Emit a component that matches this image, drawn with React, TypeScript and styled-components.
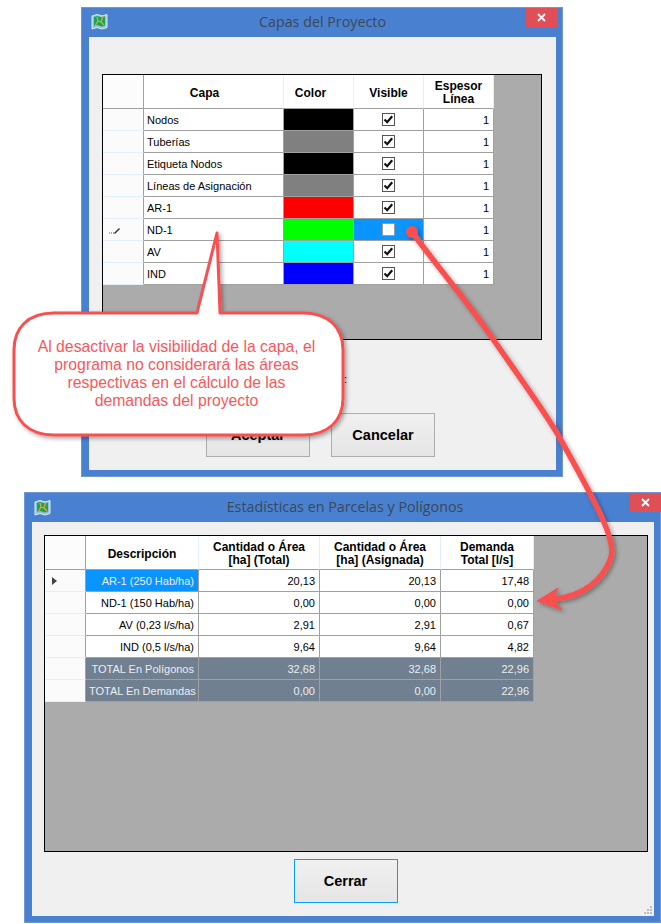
import React from "react";
import styled, { createGlobalStyle } from "styled-components";

const layers = [
    { name: "Nodos", color: "#000000", visible: true },
    { name: "Tuberías", color: "#808080", visible: true },
    { name: "Etiqueta Nodos", color: "#000000", visible: true },
    { name: "Líneas de Asignación", color: "#808080", visible: true },
    { name: "AR-1", color: "#ff0000", visible: true },
    { name: "ND-1", color: "#00ff00", visible: false },
    { name: "AV", color: "#00ffff", visible: true },
    { name: "IND", color: "#0000ff", visible: true },
];

const stats = [
    ["AR-1 (250 Hab/ha)", "20,13", "20,13", "17,48"],
    ["ND-1 (150 Hab/ha)", "0,00", "0,00", "0,00"],
    ["AV (0,23 l/s/ha)", "2,91", "2,91", "0,67"],
    ["IND (0,5 l/s/ha)", "9,64", "9,64", "4,82"],
    ["TOTAL En Polígonos", "32,68", "32,68", "22,96"],
    ["TOTAL En Demandas", "0,00", "0,00", "22,96"],
];

const LAYER_COLS = "41px 140px 70px 70px 70px";
const STATS_COLS = "41px 113px 121px 121px 93px";

const MapIcon = () => (
    <svg width="17" height="17" viewBox="0 0 17 17">
        <path d="M1 3l5-1.5 5 1.500 5-1.500v13l-5 1.500-5-1.500-5 1.500z" fill="#8fc4dc" stroke="#dfeaf2" />
        <path d="M3 4l3-1 5 1.500 3-1v9l-3 1-5-1.500-3 1z" fill="#12a85a" />
        <path d="M4 13l3-5 3 1 2-6M7 8l-1-4M10 9l3 3" fill="none" stroke="#f0a030" strokeWidth="1.200" />
    </svg>
);

const CloseGlyph = () => (
    <svg width="9" height="9" viewBox="0 0 9 9">
        <path d="M1 1l7 7M8 1l-7 7" stroke="#fff" strokeWidth="1.800" />
    </svg>
);

const CheckBox = ({ checked }: { checked: boolean }) => (
    <Box $checked={checked}>
        {checked && (
            <svg width="11" height="11" viewBox="0 0 11 11">
                <path d="M1.500 5.500l2.700 2.700 5-6" fill="none" stroke="#111" strokeWidth="2.200" />
            </svg>
        )}
    </Box>
);

const TitleBar = ({
    title,
    iconTop,
    closeRight,
    titleShift,
}: {
    title: string;
    iconTop: number;
    closeRight: number;
    titleShift: number;
}) => (
    <Bar>
        <IconSlot $top={iconTop}>
            <MapIcon />
        </IconSlot>
        <Title $shift={titleShift}>{title}</Title>
        <CloseButton $right={closeRight}>
            <CloseGlyph />
        </CloseButton>
    </Bar>
);

const LayersWindow = () => (
    <Window $width={482} $height={470} $left={81}>
        <TitleBar title="Capas del Proyecto" iconTop={6} closeRight={-1} titleShift={0} />
        <Client $top={37} $left={13}>
            <Grid $width={440} $height={266}>
                <HeaderRow $cols={LAYER_COLS}>
                    <HeaderHead />
                    <HeaderCell $shift={18}>Capa</HeaderCell>
                    <HeaderCell $shift={16}>Color</HeaderCell>
                    <HeaderCell>Visible</HeaderCell>
                    <HeaderCell>
                        Espesor
                        <br />
                        Línea
                    </HeaderCell>
                </HeaderRow>
                {layers.map((layer) => (
                    <Row $cols={LAYER_COLS} key={layer.name}>
                        <RowHead>
                            {!layer.visible && (
                                <svg width="12" height="8" viewBox="0 0 12 8">
                                    <path d="M5 7l5-5 1 1-5 5z" fill="#333" />
                                    <path d="M0 7h1M2 7h1M4 7h1" stroke="#555" />
                                </svg>
                            )}
                        </RowHead>
                        <Cell>{layer.name}</Cell>
                        <Swatch $color={layer.color} />
                        <CheckCell $selected={!layer.visible}>
                            <CheckBox checked={layer.visible} />
                        </CheckCell>
                        <Cell $align="right">1</Cell>
                    </Row>
                ))}
            </Grid>
            <NoteRow>:</NoteRow>
            <ButtonRow>
                <Button>Aceptar</Button>
                <Button>Cancelar</Button>
            </ButtonRow>
        </Client>
    </Window>
);

const StatsWindow = () => (
    <Window $width={637} $height={431} $left={24}>
        <TitleBar title="Estadísticas en Parcelas y Polígonos" iconTop={7} closeRight={-7} titleShift={4} />
        <Client $top={13} $left={12}>
            <Grid $width={604} $height={317}>
                <HeaderRow $cols={STATS_COLS}>
                    <HeaderHead />
                    <HeaderCell>Descripción</HeaderCell>
                    <HeaderCell>
                        Cantidad o Área
                        <br />
                        [ha] (Total)
                    </HeaderCell>
                    <HeaderCell>
                        Cantidad o Área
                        <br />
                        [ha] (Asignada)
                    </HeaderCell>
                    <HeaderCell>
                        Demanda
                        <br />
                        Total [l/s]
                    </HeaderCell>
                </HeaderRow>
                {stats.map((row, i) => (
                    <Row $cols={STATS_COLS} key={row[0]}>
                        <RowHead>
                            {i === 0 && <Pointer />}
                        </RowHead>
                        <Cell $align="right" $selected={i === 0} $total={i > 3}>
                            {row[0]}
                        </Cell>
                        <Cell $align="right" $total={i > 3}>{row[1]}</Cell>
                        <Cell $align="right" $total={i > 3}>{row[2]}</Cell>
                        <Cell $align="right" $total={i > 3}>{row[3]}</Cell>
                    </Row>
                ))}
            </Grid>
            <CloseRow>
                <Button $focused>Cerrar</Button>
            </CloseRow>
            <Grip>
                <svg width="10" height="10" viewBox="0 0 10 10">
                    <path d="M7 1h2v2H7zM4 4h2v2H4zM7 4h2v2H7zM1 7h2v2H1zM4 7h2v2H4zM7 7h2v2H7z" fill="#bdbdbd" />
                </svg>
            </Grip>
        </Client>
    </Window>
);

const App = () => (
    <>
        <GlobalStyle />
        <Page>
            <LayersWindow />
            <StatsWindow />
            <Overlay width="661" height="924" viewBox="0 0 661 924">
                <g filter="url(#shadow)">
                    <path
                        d="M54 313H197L217 233L220 313H303C329 313 343 328 343 350V398C343 420 329 435 303 435H54C28 435 14 420 14 398V350C14 328 28 313 54 313Z"
                        fill="#fff"
                        stroke="#fa4f4f"
                        strokeWidth="3"
                        strokeLinejoin="round"
                    />
                    <circle cx="412" cy="232" r="6" fill="#fa4f4f" />
                    <path
                        d="M412 232C440 270 470 305 493 339C520 378 540 405 557 433C575 465 592 495 603 520C612 540 614 552 610 560C603 578 585 597 553 599"
                        fill="none"
                        stroke="#fa4f4f"
                        strokeWidth="5.500"
                    />
                    <path d="M537 601L558 588L553 599L562 610Z" fill="#fa4f4f" stroke="#fa4f4f" strokeLinejoin="round" />
                </g>
                <defs>
                    <filter id="shadow" x="-10%" y="-10%" width="120%" height="120%">
                        <feDropShadow dx="2" dy="2" stdDeviation="2" floodColor="#000" floodOpacity="0.35" />
                    </filter>
                </defs>
            </Overlay>
            <CalloutText>
                Al desactivar la visibilidad de la capa, el
                <br />
                programa no considerará las áreas
                <br />
                respectivas en el cálculo de las
                <br />
                demandas del proyecto
            </CalloutText>
        </Page>
    </>
);

const GlobalStyle = createGlobalStyle`
    html, body {
        margin: 0;
        background: #fff;
        overflow: hidden;
    }
    * {
        box-sizing: border-box;
    }
`;

const Page = styled.div`
    position: relative;
    display: flex;
    flex-direction: column;
    gap: 15px;
    width: 661px;
    height: 924px;
    padding-top: 7px;
    overflow: hidden;
    font-family: "Liberation Sans", Arial, sans-serif;
`;

const Window = styled.section<{ $width: number; $height: number; $left: number }>`
    display: flex;
    flex-direction: column;
    flex: none;
    width: ${({ $width }) => $width}px;
    height: ${({ $height }) => $height}px;
    margin-left: ${({ $left }) => $left}px;
    padding: 0 7px 7px 8px;
    background: #4a80d0;
    box-shadow: inset 0 0 0 1px #6f97d2;
`;

const Bar = styled.header`
    position: relative;
    display: flex;
    align-items: center;
    justify-content: center;
    flex: none;
    height: 30px;
    padding-bottom: 2px;
`;

const IconSlot = styled.span<{ $top: number }>`
    position: absolute;
    left: 2px;
    top: ${({ $top }) => $top}px;
    display: flex;
`;

const Title = styled.h1<{ $shift: number }>`
    margin: 0;
    padding-left: ${({ $shift }) => $shift}px;
    font-family: "Open Sans", sans-serif;
    font-size: 14.300px;
    font-weight: 400;
    color: #3b4858;
`;

const CloseButton = styled.span<{ $right: number }>`
    position: absolute;
    right: ${({ $right }) => $right}px;
    top: 1px;
    display: flex;
    align-items: center;
    justify-content: center;
    width: 31px;
    height: 19px;
    background: #e04f55;
`;

const Client = styled.div<{ $top: number; $left: number }>`
    position: relative;
    flex: 1;
    padding: ${({ $top }) => $top}px 13px 13px ${({ $left }) => $left}px;
    background: #f0f0f0;
`;

const Grid = styled.div<{ $width: number; $height: number }>`
    width: ${({ $width }) => $width}px;
    height: ${({ $height }) => $height}px;
    border: 1px solid #000;
    background: #ababab;
    overflow: hidden;
`;

const Row = styled.div<{ $cols: string }>`
    display: grid;
    grid-template-columns: ${({ $cols }) => $cols};
    width: max-content;
    height: 22px;
`;

const HeaderRow = styled(Row)`
    height: 34px;
`;

const HeaderHead = styled.div`
    background: #fcfcfc;
    border-right: 1px solid #a0a0a0;
    border-bottom: 1px solid #a0a0a0;
`;

const HeaderCell = styled.div<{ $shift?: number }>`
    display: flex;
    align-items: center;
    justify-content: center;
    padding-top: 3px;
    padding-right: ${({ $shift }) => $shift ?? 0}px;
    text-align: center;
    background: #fff;
    border-right: 1px solid #e3effa;
    border-bottom: 1px solid #a0a0a0;
    font-size: 12px;
    font-weight: 700;
    line-height: 13px;
    color: #000;
`;

const RowHead = styled.div`
    display: flex;
    align-items: center;
    padding-left: 6px;
    background: #fbfbfb;
    border-right: 1px solid #a0a0a0;
    border-bottom: 1px solid #e3effa;
`;

const Pointer = styled.span`
    display: block;
    margin-left: 1px;
    width: 0;
    height: 0;
    border-left: 5px solid #444;
    border-top: 4px solid transparent;
    border-bottom: 4px solid transparent;
`;

const Cell = styled.div<{ $align?: string; $selected?: boolean; $total?: boolean }>`
    height: 22px;
    padding: 1px 4px 0 3px;
    background: ${({ $selected, $total }) => ($selected ? "#0a94ff" : $total ? "#708090" : "#fff")};
    border-right: 1px solid #a0a0a0;
    border-bottom: 1px solid #a0a0a0;
    font-size: 11px;
    line-height: 20px;
    white-space: nowrap;
    text-align: ${({ $align }) => $align ?? "left"};
    color: ${({ $selected, $total }) => ($selected || $total ? "#e9eef2" : "#000")};
`;

const Swatch = styled.div<{ $color: string }>`
    background: ${({ $color }) => $color};
    border-right: 1px solid #a0a0a0;
    border-bottom: 1px solid #a0a0a0;
`;

const CheckCell = styled.div<{ $selected: boolean }>`
    display: flex;
    align-items: center;
    justify-content: center;
    background: ${({ $selected }) => ($selected ? "#0a94ff" : "#fff")};
    border-right: 1px solid #a0a0a0;
    border-bottom: 1px solid #a0a0a0;
`;

const Box = styled.span<{ $checked: boolean }>`
    display: flex;
    align-items: center;
    justify-content: center;
    width: 13px;
    height: 13px;
    background: #fff;
    border: 1px solid ${({ $checked }) => ($checked ? "#555" : "#9a9a9a")};
`;

const NoteRow = styled.div`
    height: 73px;
    padding: 33px 0 0 242px;
    font-size: 11px;
    color: #000;
`;

const ButtonRow = styled.div`
    display: flex;
    justify-content: center;
    gap: 21px;
    padding-right: 4px;
`;

const CloseRow = styled.div`
    display: flex;
    justify-content: center;
    margin-top: 7px;
    padding-left: 6px;
`;

const Button = styled.button<{ $focused?: boolean }>`
    width: 104px;
    height: 44px;
    padding: 0;
    background: linear-gradient(#f0f0f0, #e5e5e5);
    border: 1px solid ${({ $focused }) => ($focused ? "#0a9bff" : "#adadad")};
    font-family: "Liberation Sans", Arial, sans-serif;
    font-size: 14.500px;
    font-weight: 700;
    color: #000;
`;

const Grip = styled.span`
    position: absolute;
    right: 1px;
    bottom: 1px;
    display: flex;
`;

const Overlay = styled.svg`
    position: absolute;
    left: 0;
    top: 0;
    pointer-events: none;
`;

const CalloutText = styled.div`
    position: absolute;
    left: 12px;
    top: 338px;
    width: 329px;
    text-align: center;
    font-size: 15.750px;
    line-height: 18px;
    color: #f9575a;
`;

export default App;
